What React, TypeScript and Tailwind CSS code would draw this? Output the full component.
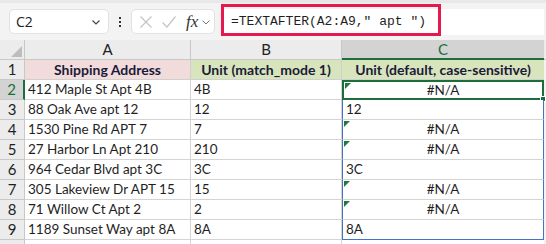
import React from 'react';

const rows = [
  { n: 2, a: '412 Maple St Apt 4B', b: '4B', c: '#N/A', err: true },
  { n: 3, a: '88 Oak Ave apt 12', b: '12', c: '12', err: false },
  { n: 4, a: '1530 Pine Rd APT 7', b: '7', c: '#N/A', err: true },
  { n: 5, a: '27 Harbor Ln Apt 210', b: '210', c: '#N/A', err: true },
  { n: 6, a: '964 Cedar Blvd apt 3C', b: '3C', c: '3C', err: false },
  { n: 7, a: '305 Lakeview Dr APT 15', b: '15', c: '#N/A', err: true },
  { n: 8, a: '71 Willow Ct Apt 2', b: '2', c: '#N/A', err: true },
  { n: 9, a: '1189 Sunset Way apt 8A', b: '8A', c: '8A', err: false },
];

const cellFont = { fontFamily: 'Lato, "Open Sans", sans-serif' };

const ErrorMark = () => (
  <div className="absolute left-[1px] top-[1px] w-0 h-0 border-t-[6px] border-r-[6px] border-t-[#1e7a3a] border-r-transparent" />
);

export default function App() {
  return (
    <div className="w-[546px] h-[244px] overflow-hidden bg-[#f3f3f3] text-[#1f1f1f]" style={cellFont}>
      {/* formula bar */}
      <div className="h-[40px] border-t-[3px] border-[#e8e8e8] flex items-center relative">
        <div className="ml-[9px] w-[100px] h-[25px] bg-white rounded-[5px] border border-[#e2e2e2] flex items-center justify-between pl-[6px] pr-[6px]">
          <span className="text-[14px] text-[#222]" style={{ fontFamily: '"Open Sans", sans-serif' }}>C2</span>
          <svg width="12" height="12" viewBox="0 0 12 12" fill="none" stroke="#444" strokeWidth="1.2">
            <path d="M2.5 4.5 L6 8 L9.5 4.5" />
          </svg>
        </div>
        <div className="w-[22px] flex flex-col items-center gap-[2px]">
          <div className="w-[2px] h-[2px] bg-[#333]" />
          <div className="w-[2px] h-[2px] bg-[#333]" />
          <div className="w-[2px] h-[2px] bg-[#333]" />
        </div>
        <div className="w-[84px] h-[25px] bg-white rounded-[5px] border border-[#e2e2e2] flex items-center pl-[7px]">
          <svg width="14" height="14" viewBox="0 0 14 14" fill="none" stroke="#c4c4c4" strokeWidth="1.2">
            <path d="M1.5 1.5 L12.5 12.5 M12.5 1.5 L1.5 12.5" />
          </svg>
          <svg className="ml-[8px]" width="16" height="14" viewBox="0 0 16 14" fill="none" stroke="#c4c4c4" strokeWidth="1.2">
            <path d="M1.5 7.5 L6 12 L14.5 1.5" />
          </svg>
          <span className="ml-[9px] text-[17px] italic text-[#333] leading-none" style={{ fontFamily: '"Liberation Serif", serif' }}>fx</span>
          <svg className="ml-[3px]" width="10" height="10" viewBox="0 0 10 10" fill="none" stroke="#777" strokeWidth="1">
            <path d="M1.5 3.5 L5 7 L8.5 3.5" />
          </svg>
        </div>
        <div className="ml-[7px] flex-1 mr-[2px] h-[26px] bg-white flex items-center pl-[9px]">
          <span className="text-[13px] text-[#1f1f1f]" style={{ fontFamily: '"Liberation Mono", monospace' }}>=TEXTAFTER(A2:A9," apt ")</span>
        </div>
        <div className="absolute left-[221px] top-[1px] w-[220px] h-[32px] border-[3px] border-[#e5184f]" />
      </div>

      {/* column headers */}
      <div className="flex h-[20px] text-[15px] text-[#222]">
        <div className="w-[25px] bg-[#ececec] border-r border-b border-[#c8c8c8] relative">
          <div className="absolute right-[2px] bottom-[2px] w-0 h-0 border-l-[11px] border-b-[11px] border-l-transparent border-b-[#bdbdbd]" />
        </div>
        <div className="w-[166px] bg-[#ececec] border-r border-b border-[#c8c8c8] flex items-center justify-center">A</div>
        <div className="w-[151px] bg-[#ececec] border-r border-b border-[#c8c8c8] flex items-center justify-center">B</div>
        <div className="w-[202px] bg-[#d3d3d3] border-b-2 border-[#1e6e3c] flex items-center justify-center text-[#1e6e3c]">C</div>
        <div className="flex-1 bg-[#ececec] border-b border-[#c8c8c8]" />
      </div>

      {/* row 1 */}
      <div className="flex h-[20px] text-[14px]">
        <div className="w-[25px] bg-[#ececec] border-r border-b border-[#c8c8c8] flex items-center justify-center text-[15px]">1</div>
        <div className="w-[166px] bg-[#f2dcdb] border-r border-b border-[#cfcfcf] flex items-center justify-center font-bold text-[#1a1a3a]">Shipping Address</div>
        <div className="w-[151px] bg-[#d8e4bc] border-r border-b border-[#cfcfcf] flex items-center justify-center font-bold text-[#1a1a3a]">Unit (match_mode 1)</div>
        <div className="w-[202px] bg-[#d8e4bc] border-b border-[#cfcfcf] flex items-center justify-center font-bold text-[#1a1a3a]">Unit (default, case-sensitive)</div>
        <div className="flex-1 bg-[#f3f3f3]" />
      </div>

      {rows.map((r) => {
        const sel = r.n === 2;
        return (
          <div key={r.n} className="flex h-[20px] text-[13.5px]">
            <div
              className={
                sel
                  ? 'w-[25px] bg-[#d3d3d3] border-r-2 border-b border-r-[#1e6e3c] border-b-[#c8c8c8] flex items-center justify-center text-[15px] text-[#1e6e3c]'
                  : 'w-[25px] bg-[#ececec] border-r border-b border-[#c8c8c8] flex items-center justify-center text-[15px]'
              }
            >
              {r.n}
            </div>
            <div className="w-[166px] bg-white border-r border-b border-[#d4d4d4] flex items-center pl-[3px] whitespace-nowrap">{r.a}</div>
            <div className="w-[151px] bg-white border-r border-b border-[#d4d4d4] flex items-center pl-[3px]">{r.b}</div>
            <div
              className={
                sel
                  ? 'w-[202px] bg-white border-2 border-[#1e6e3c] relative flex items-center justify-center'
                  : r.n === 9
                  ? 'w-[202px] bg-white border-x border-b border-[#4472c4] relative flex items-center pl-[3px]'
                  : r.err
                  ? 'w-[202px] bg-white border-x border-x-[#4472c4] border-b border-b-[#d4d4d4] relative flex items-center justify-center'
                  : 'w-[202px] bg-white border-x border-x-[#4472c4] border-b border-b-[#d4d4d4] relative flex items-center pl-[3px]'
              }
            >
              {r.err && <ErrorMark />}
              {r.c}
              {sel && <div className="absolute right-[-4px] bottom-[-4px] w-[6px] h-[6px] bg-[#1e6e3c] border border-white" />}
            </div>
            <div className="flex-1 bg-[#f3f3f3]" />
          </div>
        );
      })}

      <div className="flex h-[10px]">
        <div className="w-[25px] bg-[#ececec] border-r border-[#c8c8c8]" />
        <div className="w-[166px] bg-white border-r border-[#d4d4d4]" />
        <div className="w-[151px] bg-white border-r border-[#d4d4d4]" />
        <div className="w-[202px] bg-white" />
      </div>
    </div>
  );
}
